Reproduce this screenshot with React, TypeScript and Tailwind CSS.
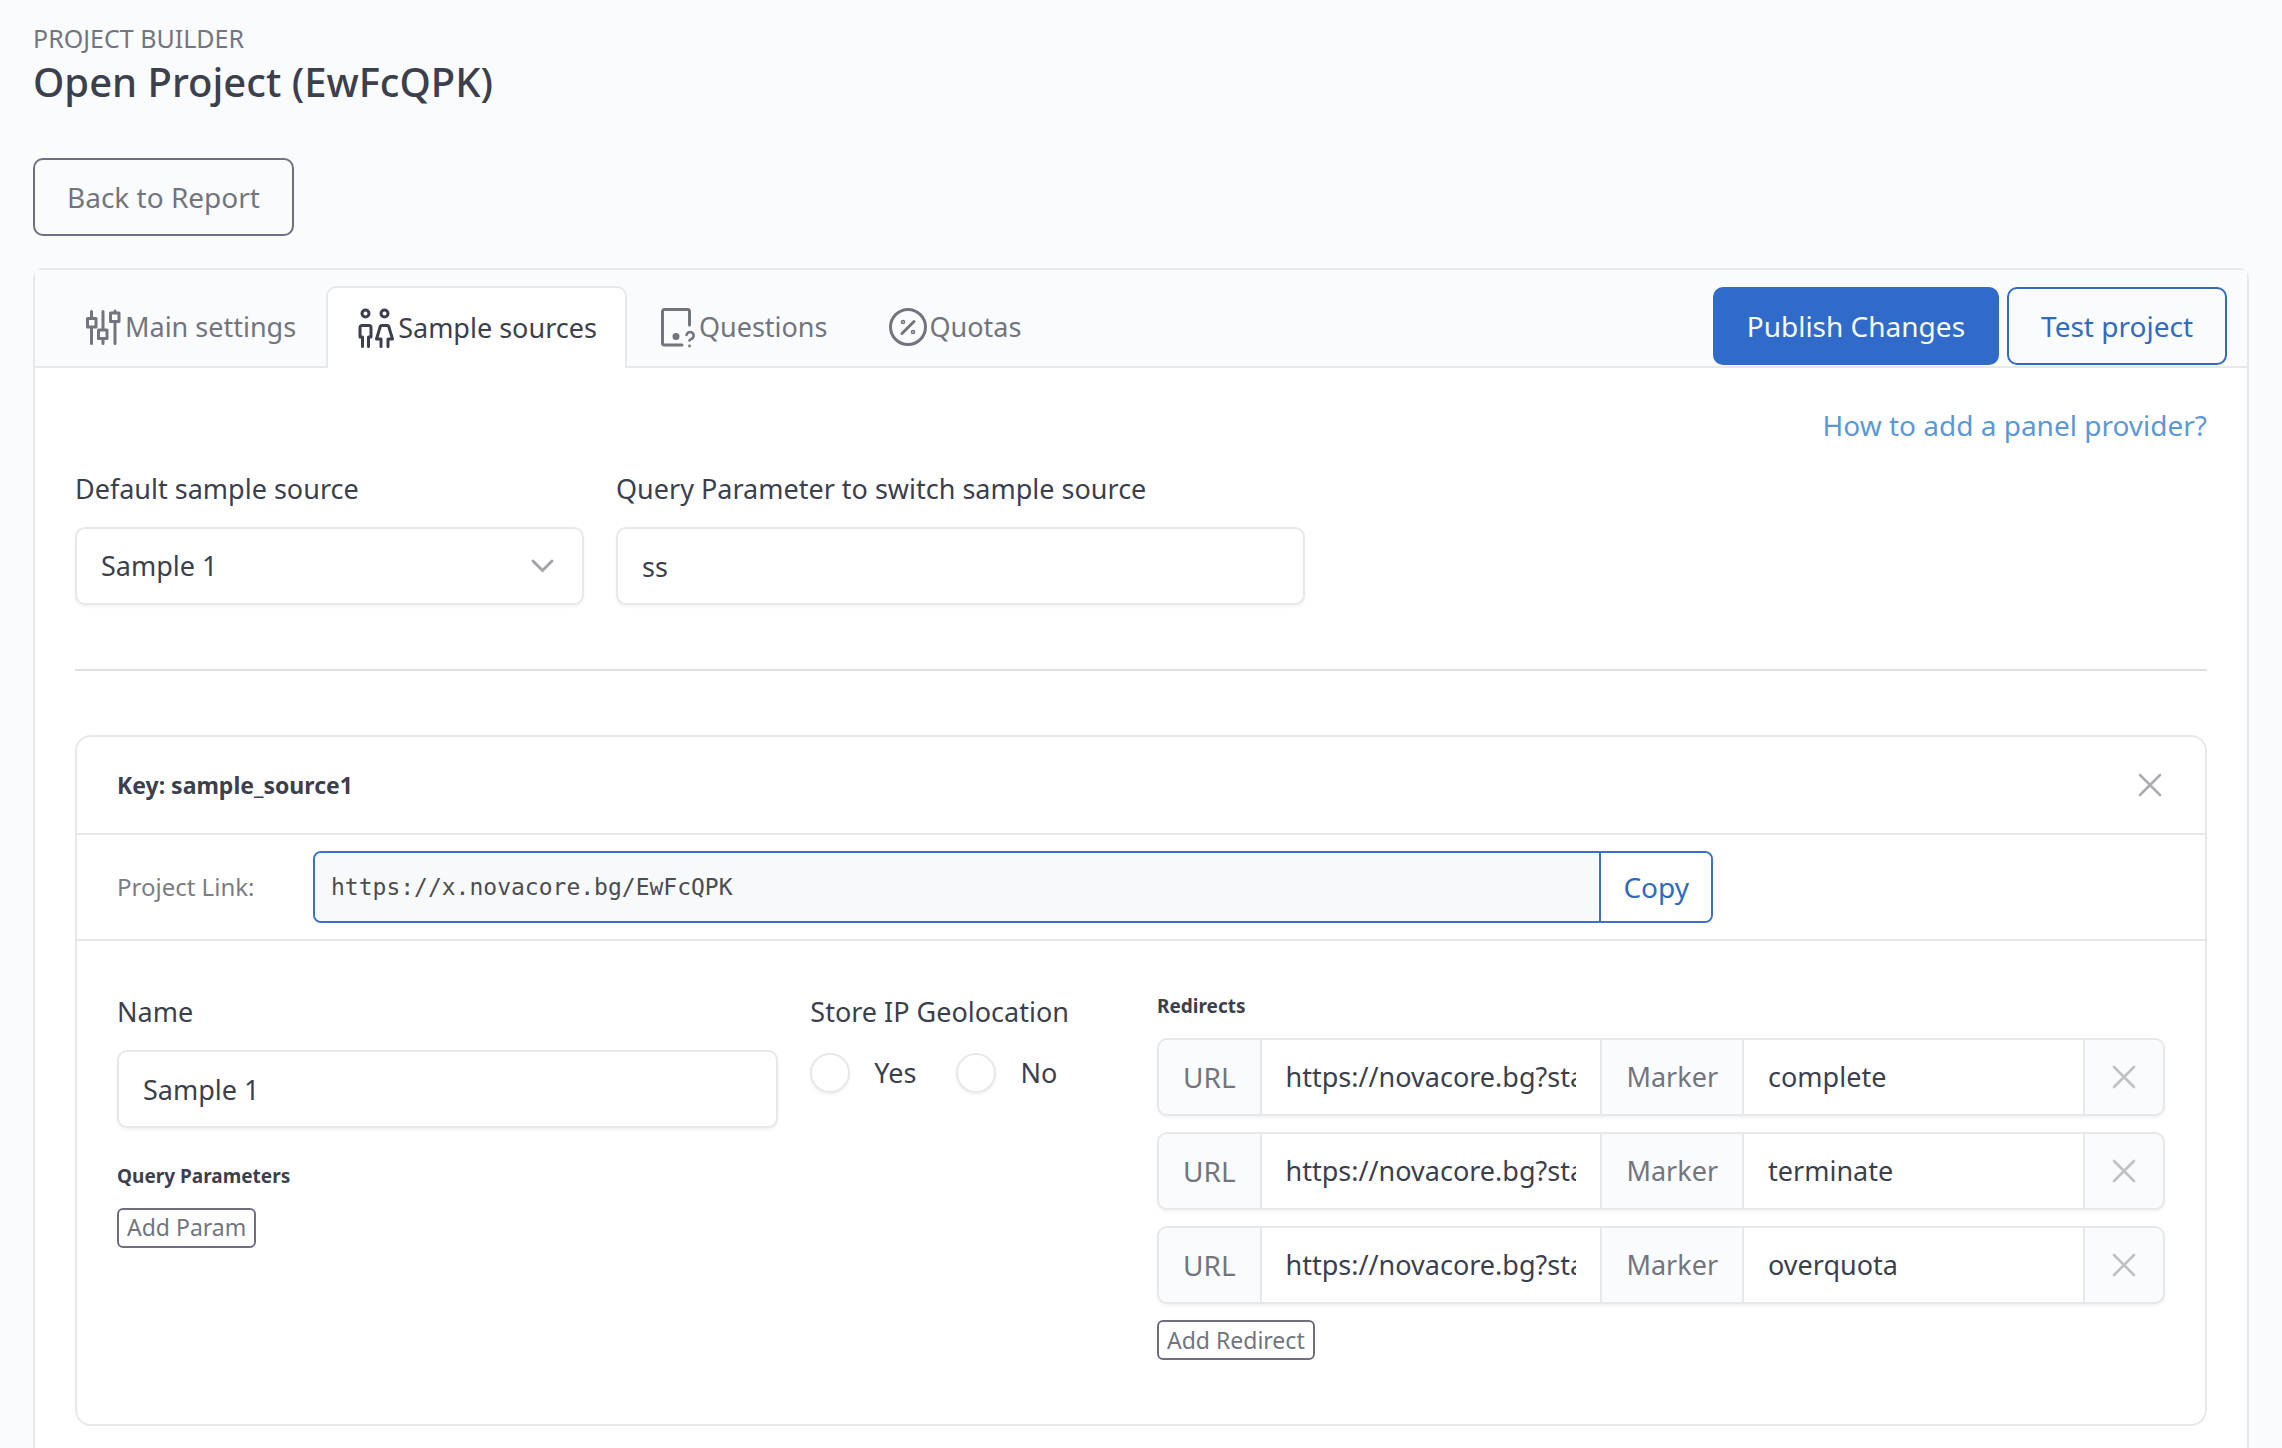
import type { ReactNode } from "react";

const redirects = [
  { url: "https://novacore.bg?status=complete", marker: "complete" },
  { url: "https://novacore.bg?status=terminate", marker: "terminate" },
  { url: "https://novacore.bg?status=overquota", marker: "overquota" },
];

function TabIcon({ children }: { children: ReactNode }) {
  return (
    <svg
      className="size-10 shrink-0 overflow-visible"
      viewBox="0 0 40 40"
      fill="none"
      stroke="currentColor"
      strokeWidth="3"
      strokeLinecap="round"
      strokeLinejoin="round"
      aria-hidden="true"
    >
      {children}
    </svg>
  );
}

function CloseIcon() {
  return (
    <svg className="size-[30px]" viewBox="0 0 30 30" fill="none" stroke="currentColor" strokeWidth="2.6" strokeLinecap="round" aria-hidden="true">
      <path d="M5 5l20 20M25 5L5 25" />
    </svg>
  );
}

const tabs = [
  {
    label: "Main settings",
    active: false,
    icon: (
      <TabIcon>
        <path d="M8.500 4.500v7M8.500 21v15.500M20 4.500v18M20 32v4.500M32 4v1.500M32 15v21.500" />
        <rect x="4.500" y="11.500" width="8.500" height="8.500" />
        <rect x="15.500" y="23" width="8.500" height="8.500" />
        <rect x="27.500" y="6" width="8.500" height="8.500" />
      </TabIcon>
    ),
  },
  {
    label: "Sample sources",
    active: true,
    icon: (
      <TabIcon>
        <circle cx="9.500" cy="5.500" r="3.500" />
        <circle cx="28.500" cy="5.500" r="3.500" />
        <path d="M6.500 38.500V29H4V19.500a2 2 0 0 1 2-2h7a2 2 0 0 1 2 2V29h-2.500v9.500" />
        <path d="M25 38.500V31h-4.500L24 19.500a2 2 0 0 1 2-2h5a2 2 0 0 1 2 2L36.500 31H32v7.500" />
      </TabIcon>
    ),
  },
  {
    label: "Questions",
    active: false,
    icon: (
      <TabIcon>
        <path d="M32.500 18V4.500a2 2 0 0 0-2-2H7.500a2 2 0 0 0-2 2V36a2 2 0 0 0 2 2H25" />
        <circle cx="19" cy="29.500" r="2" fill="currentColor" />
        <path strokeWidth="2.600" d="M29.500 28a3.600 3.600 0 1 1 4.800 4c-1.200.4-1.800.7-1.800 1.500" />
        <path strokeWidth="2.800" d="M32.500 39v.1" />
      </TabIcon>
    ),
  },
  {
    label: "Quotas",
    active: false,
    icon: (
      <TabIcon>
        <circle cx="20" cy="20" r="17.500" />
        <path d="M14 26.500L26 14.500" />
        <circle cx="15" cy="15" r=".8" />
        <circle cx="25" cy="25" r=".8" />
      </TabIcon>
    ),
  },
];

const inputClass =
  "h-[78px] w-full rounded-[10px] border-2 border-[#e6e8e9] bg-white px-6 shadow-[0_2px_3px_rgba(35,46,60,0.06)] outline-none";
const labelClass = "mb-[18px] block leading-10";
const buttonClass = "h-[78px] rounded-[10px] border-2 px-8 text-[28px]";
const smallButtonClass =
  "h-10 rounded-md border-2 border-[#6e7080] bg-white px-2 text-[23px] leading-none text-[#72757e]";

export default function App() {
  return (
    <div className="h-screen overflow-hidden bg-[#fafbfd] px-[33px] pt-5 font-['Noto_Sans',sans-serif] text-[27px] text-[#3c3f4c]">
      {/* Page header */}
      <div className="text-[25px] leading-9 text-[#72757e]">PROJECT BUILDER</div>
      <h1 className="text-[40px] leading-[52px] font-medium">Open Project (EwFcQPK)</h1>
      <button type="button" className={`${buttonClass} mt-[50px] border-[#6e7080] text-[#72757e]`}>
        Back to Report
      </button>

      <div className="mt-8 rounded-[10px] border-2 border-[#e6e8ea] bg-white pb-16">
        {/* Tabs */}
        <div className="flex items-end justify-between border-b-2 border-[#e6e8ea] bg-[#fafbfd] pt-4 pr-5 pl-[18px]">
          <nav className="-mb-0.5 flex">
            {tabs.map((tab) => (
              <a
                key={tab.label}
                href="#"
                className={
                  tab.active
                    ? "flex h-[82px] items-center rounded-t-[10px] border-2 border-b-0 border-[#e6e8ea] bg-white px-7"
                    : "flex h-[82px] items-center border-x-2 border-transparent px-7 text-[#72757e]"
                }
              >
                {tab.icon}
                <span className="pl-0.5">{tab.label}</span>
              </a>
            ))}
          </nav>
          <div className="flex gap-2 pb-px">
            <button type="button" className={`${buttonClass} border-[#306bc9] bg-[#306bc9] text-[#f8fafc]`}>
              Publish Changes
            </button>
            <button type="button" className={`${buttonClass} border-[#306bc0] text-[#306bc0]`}>
              Test project
            </button>
          </div>
        </div>

        <div className="px-10 pt-[37px]">
          <div className="flex justify-end">
            <a href="#" className="text-[28px] leading-10 text-[#5d98d6]">
              How to add a panel provider?
            </a>
          </div>

          <div className="mt-6 grid grid-cols-12 gap-8">
            <div className="col-span-3">
              <label htmlFor="default-source" className={labelClass}>
                Default sample source
              </label>
              <div className="relative">
                <select id="default-source" className={`${inputClass} appearance-none`}>
                  <option>Sample 1</option>
                </select>
                <svg
                  className="pointer-events-none absolute top-6 right-[26px] size-[30px] text-[#a0a3a8]"
                  viewBox="0 0 30 30"
                  fill="none"
                  stroke="currentColor"
                  strokeWidth="3"
                  strokeLinecap="round"
                  aria-hidden="true"
                >
                  <path d="M5 10l9.500 9.500L24 10" />
                </svg>
              </div>
            </div>
            <div className="col-span-4">
              <label htmlFor="query-param" className={labelClass}>
                Query Parameter to switch sample source
              </label>
              <input id="query-param" type="text" defaultValue="ss" className={inputClass} />
            </div>
          </div>

          <hr className="my-16 border-t-2 border-[#dfe0e2]" />

          {/* Sample source */}
          <div className="rounded-2xl border-2 border-[#e6e8ea]">
            <div className="flex h-[98px] items-center justify-between border-b-2 border-[#e6e8ea] px-10">
              <h2 className="text-[23px] font-bold">Key: sample_source1</h2>
              <button type="button" aria-label="Remove sample source" className="text-[#abadb1]">
                <CloseIcon />
              </button>
            </div>

            <div className="grid grid-cols-[196px_1400fr_452fr] items-center border-b-2 border-[#e6e8ea] px-10 py-4">
              <label htmlFor="project-link" className="text-[24px] text-[#7b7d84]">
                Project Link:
              </label>
              <div className="flex h-[72px] overflow-hidden rounded-lg border-2 border-[#3b6fc9]">
                <input
                  id="project-link"
                  type="text"
                  readOnly
                  defaultValue="https://x.novacore.bg/EwFcQPK"
                  className="min-w-0 flex-1 bg-[#f8f9fb] px-4 font-['DejaVu_Sans_Mono',monospace] text-[23px] text-[#4b4d50] outline-none"
                />
                <button type="button" className="border-l-2 border-[#3b6fc9] bg-white px-[22px] text-[28px] text-[#306bc0]">
                  Copy
                </button>
              </div>
            </div>

            <div className="grid grid-cols-2 gap-8 px-10 pt-[51px] pb-16">
              <div>
                <div className="grid grid-cols-3 gap-8">
                  <div className="col-span-2">
                    <label htmlFor="source-name" className={labelClass}>
                      Name
                    </label>
                    <input id="source-name" type="text" defaultValue="Sample 1" className={inputClass} />
                  </div>
                  <fieldset>
                    <legend className="mb-[21px] leading-10 whitespace-nowrap">Store IP Geolocation</legend>
                    <div className="flex gap-10">
                      {["Yes", "No"].map((option) => (
                        <label key={option} className="flex items-center gap-6">
                          <input
                            type="radio"
                            name="store-ip"
                            className="size-10 appearance-none rounded-full border-2 border-[#e6e8ea] bg-white shadow-[0_2px_3px_rgba(35,46,60,0.06)]"
                          />
                          {option}
                        </label>
                      ))}
                    </div>
                  </fieldset>
                </div>
                <h3 className="mt-[34px] mb-4 text-[19px] leading-7 font-bold">Query Parameters</h3>
                <button type="button" className={smallButtonClass}>
                  Add Param
                </button>
              </div>

              <div>
                <h3 className="mb-[18px] text-[19px] leading-7 font-bold">Redirects</h3>
                <div className="flex flex-col gap-4">
                  {redirects.map((redirect) => (
                    <div
                      key={redirect.marker}
                      className="flex h-[78px] overflow-hidden rounded-[10px] border-2 border-[#e6e8ea] bg-[#fafbfd] shadow-[0_2px_3px_rgba(35,46,60,0.06)]"
                    >
                      <label htmlFor={`url-${redirect.marker}`} className="flex items-center px-6 text-[28px] text-[#72757e]">
                        URL
                      </label>
                      <div className="flex min-w-0 flex-1 border-x-2 border-[#e6e8ea] bg-white px-6">
                        <input
                          id={`url-${redirect.marker}`}
                          type="text"
                          defaultValue={redirect.url}
                          className="w-full min-w-0 outline-none"
                        />
                      </div>
                      <label htmlFor={`marker-${redirect.marker}`} className="flex items-center px-6 text-[#72757e]">
                        Marker
                      </label>
                      <div className="flex min-w-0 flex-1 border-x-2 border-[#e6e8ea] bg-white px-6">
                        <input
                          id={`marker-${redirect.marker}`}
                          type="text"
                          defaultValue={redirect.marker}
                          className="w-full min-w-0 outline-none"
                        />
                      </div>
                      <button type="button" aria-label="Remove redirect" className="px-6 text-[#bfc1c4]">
                        <CloseIcon />
                      </button>
                    </div>
                  ))}
                </div>
                <button type="button" className={`${smallButtonClass} mt-4`}>
                  Add Redirect
                </button>
              </div>
            </div>
          </div>
        </div>
      </div>
    </div>
  );
}
